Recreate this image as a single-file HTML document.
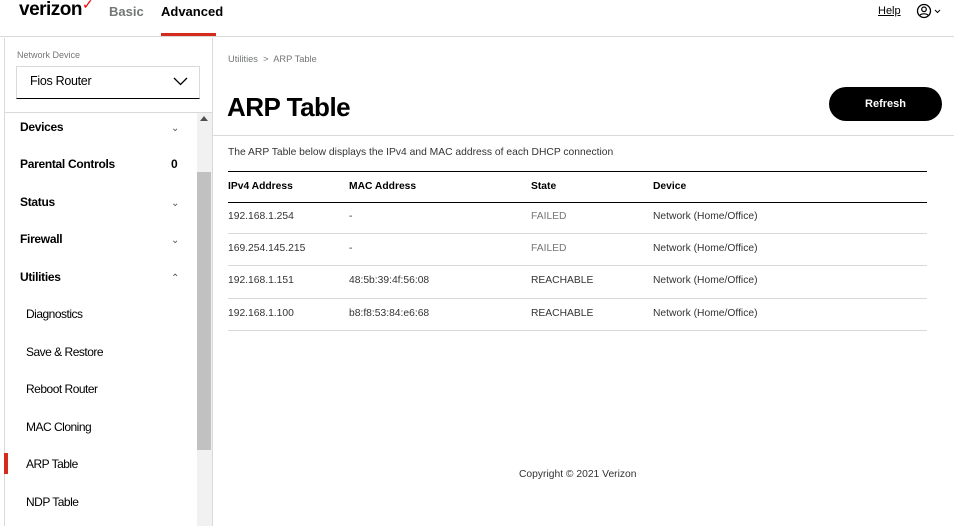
<!DOCTYPE html>
<html><head><style>
*{margin:0;padding:0;box-sizing:border-box}
body{width:954px;height:526px;overflow:hidden;background:#fff;font-family:"Liberation Sans",Arial,sans-serif;color:#000;position:relative}
.a{position:absolute}
.hdr{left:0;top:0;width:954px;height:37px;border-bottom:1px solid #d8dada}
.logo{left:19px;top:-1px;font-size:19px;font-weight:bold;letter-spacing:-0.5px}
.nav{font-size:13px;font-weight:bold;top:4px}
.side{left:4px;top:38px;width:209px;height:488px;border-left:1px solid #d8dada;border-right:1px solid #d8dada}
.item{left:20px;font-size:12px;font-weight:bold;letter-spacing:-0.3px}
.sub{left:26px;font-size:12px;color:#000;letter-spacing:-0.5px}
.chev{left:171px;font-size:10px;color:#555}
.cell{font-size:10.3px;color:#333}
.hline{left:228px;width:699px;height:1px;background:#d8dada}
</style></head><body>
<div class="a hdr"></div>
<div class="a logo">verizon<span style="color:#e00;font-weight:normal;font-size:14px;position:relative;top:-6px">✓</span></div>
<div class="a nav" style="left:109px;color:#747676">Basic</div>
<div class="a nav" style="left:161px">Advanced</div>
<div class="a" style="left:161px;top:33px;width:55px;height:3px;background:#d52b1e"></div>
<div class="a" style="left:878px;top:5px;font-size:11px;text-decoration:underline">Help</div>
<svg class="a" style="left:916px;top:3px" width="30" height="18"><circle cx="8" cy="8" r="6.5" fill="none" stroke="#000" stroke-width="1.3"/><circle cx="8" cy="6.3" r="2.3" fill="none" stroke="#000" stroke-width="1.2"/><path d="M3.6 12.6c1.5-2.4 7.3-2.4 8.8 0" fill="none" stroke="#000" stroke-width="1.2"/><path d="M19 7l2.5 2.5L24 7" fill="none" stroke="#000" stroke-width="1"/></svg>

<div class="a side"></div>
<div class="a" style="left:5px;top:112px;width:207px;height:1px;background:#d8dada"></div>
<div class="a" style="left:17px;top:50px;font-size:9px;color:#747676">Network Device</div>
<div class="a" style="left:16px;top:66px;width:184px;height:33px;border:1px solid #d8dada;border-bottom:1px solid #000"></div>
<div class="a" style="left:30px;top:74px;font-size:12.5px;letter-spacing:-0.3px">Fios Router</div>
<svg class="a" style="left:173px;top:76px" width="16" height="12"><path d="M1 2l6.5 6.5L14 2" fill="none" stroke="#000" stroke-width="1.3"/></svg>
<div class="a" style="left:197px;top:113px;width:15px;height:413px;background:#f1f1f1"></div>
<div class="a" style="left:197px;top:172px;width:14px;height:278px;background:#c1c1c1"></div>
<div class="a" style="left:200px;top:116px;width:0;height:0;border-left:4px solid transparent;border-right:4px solid transparent;border-bottom:5px solid #505050"></div>

<div class="a item" style="top:120px">Devices</div><div class="a chev" style="top:123px">⌄</div>
<div class="a item" style="top:157px">Parental Controls</div><div class="a" style="left:171px;top:157px;font-size:12px;font-weight:bold">0</div>
<div class="a item" style="top:195px">Status</div><div class="a chev" style="top:198px">⌄</div>
<div class="a item" style="top:232px">Firewall</div><div class="a chev" style="top:235px">⌄</div>
<div class="a item" style="top:270px">Utilities</div><div class="a chev" style="top:273px">⌃</div>
<div class="a sub" style="top:307px">Diagnostics</div>
<div class="a sub" style="top:345px">Save &amp; Restore</div>
<div class="a sub" style="top:382px">Reboot Router</div>
<div class="a sub" style="top:420px">MAC Cloning</div>
<div class="a" style="left:4px;top:453px;width:4px;height:21px;background:#d52b1e"></div>
<div class="a sub" style="top:457px">ARP Table</div>
<div class="a sub" style="top:495px">NDP Table</div>

<div class="a" style="left:228px;top:54px;font-size:9.3px;color:#747676">Utilities &nbsp;&gt;&nbsp; ARP Table</div>
<div class="a" style="left:227px;top:92px;font-size:26px;font-weight:bold;letter-spacing:-0.5px">ARP Table</div>
<div class="a" style="left:829px;top:87px;width:113px;height:34px;border-radius:17px;background:#000;color:#fff;font-size:11px;font-weight:bold;text-align:center;line-height:35px">Refresh</div>
<div class="a" style="left:213px;top:135px;width:741px;height:1px;background:#d8dada"></div>
<div class="a" style="left:228px;top:147px;font-size:10.3px;color:#333">The ARP Table below displays the IPv4 and MAC address of each DHCP connection</div>
<div class="a hline" style="top:171px;background:#000"></div>
<div class="a cell" style="left:228px;top:181px;font-weight:bold;color:#000">IPv4 Address</div>
<div class="a cell" style="left:349px;top:181px;font-weight:bold;color:#000">MAC Address</div>
<div class="a cell" style="left:531px;top:181px;font-weight:bold;color:#000">State</div>
<div class="a cell" style="left:653px;top:181px;font-weight:bold;color:#000">Device</div>
<div class="a hline" style="top:202px;background:#000"></div>

<div class="a cell" style="left:228px;top:211px">192.168.1.254</div><div class="a cell" style="left:349px;top:211px">-</div><div class="a cell" style="left:531px;top:211px;color:#747676">FAILED</div><div class="a cell" style="left:653px;top:211px">Network (Home/Office)</div>
<div class="a hline" style="top:233px"></div>
<div class="a cell" style="left:228px;top:243px">169.254.145.215</div><div class="a cell" style="left:349px;top:243px">-</div><div class="a cell" style="left:531px;top:243px;color:#747676">FAILED</div><div class="a cell" style="left:653px;top:243px">Network (Home/Office)</div>
<div class="a hline" style="top:265px"></div>
<div class="a cell" style="left:228px;top:275px">192.168.1.151</div><div class="a cell" style="left:349px;top:275px">48:5b:39:4f:56:08</div><div class="a cell" style="left:531px;top:275px">REACHABLE</div><div class="a cell" style="left:653px;top:275px">Network (Home/Office)</div>
<div class="a hline" style="top:298px"></div>
<div class="a cell" style="left:228px;top:308px">192.168.1.100</div><div class="a cell" style="left:349px;top:308px">b8:f8:53:84:e6:68</div><div class="a cell" style="left:531px;top:308px">REACHABLE</div><div class="a cell" style="left:653px;top:308px">Network (Home/Office)</div>
<div class="a hline" style="top:330px"></div>

<div class="a" style="left:519px;top:469px;font-size:10.3px;color:#333">Copyright © 2021 Verizon</div>
</body></html>
